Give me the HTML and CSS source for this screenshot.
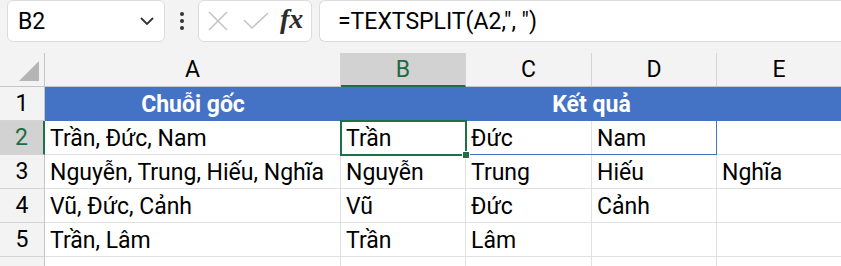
FILE: index.html
```html
<!DOCTYPE html>
<html>
   <head>
      <meta charset="utf-8">
      <link rel="stylesheet" href="styles.css">
   </head>
   <body>
      <div class="toolbar">
         <div class="namebox">
            <span>B2</span>
            <svg class="chevron" width="14" height="8" viewBox="0 0 14 8">
               <path d="M1,1 L7,7 L13,1" />
            </svg>
         </div>
         <div class="dots">
            <i></i><i></i><i></i>
         </div>
         <div class="iconbox">
            <svg class="cancel" width="20" height="20" viewBox="0 0 20 20">
               <path d="M1,1 L19,19 M19,1 L1,19" />
            </svg>
            <svg class="confirm" width="26" height="18" viewBox="0 0 26 18">
               <path d="M1,8 L9,16 L25,1" />
            </svg>
            <span class="fx">fx</span>
         </div>
         <div class="formula">=TEXTSPLIT(A2,", ")</div>
      </div>

      <div class="sheet">
         <div class="grid">
            <!-- column headers -->
            <div class="corner"><span class="tri"></span></div>
            <div class="colhead">A</div>
            <div class="colhead active">B</div>
            <div class="colhead">C</div>
            <div class="colhead">D</div>
            <div class="colhead">E</div>

            <!-- row 1 -->
            <div class="rowhead">1</div>
            <div class="title">Chuỗi gốc</div>
            <div class="title wide">Kết quả</div>

            <!-- row 2 -->
            <div class="rowhead active">2</div>
            <div class="cell">Trần, Đức, Nam</div>
            <div class="cell">Trần</div>
            <div class="cell">Đức</div>
            <div class="cell">Nam</div>
            <div class="cell"></div>

            <!-- row 3 -->
            <div class="rowhead">3</div>
            <div class="cell">Nguyễn, Trung, Hiếu, Nghĩa</div>
            <div class="cell">Nguyễn</div>
            <div class="cell">Trung</div>
            <div class="cell">Hiếu</div>
            <div class="cell">Nghĩa</div>

            <!-- row 4 -->
            <div class="rowhead">4</div>
            <div class="cell">Vũ, Đức, Cảnh</div>
            <div class="cell">Vũ</div>
            <div class="cell">Đức</div>
            <div class="cell">Cảnh</div>
            <div class="cell"></div>

            <!-- row 5 -->
            <div class="rowhead">5</div>
            <div class="cell">Trần, Lâm</div>
            <div class="cell">Trần</div>
            <div class="cell">Lâm</div>
            <div class="cell"></div>
            <div class="cell"></div>

            <!-- row 6, cut off by the window -->
            <div class="rowhead last"></div>
            <div class="cell last"></div>
            <div class="cell last"></div>
            <div class="cell last"></div>
            <div class="cell last"></div>
            <div class="cell last"></div>
         </div>

         <!-- spill range and active cell -->
         <div class="spill"></div>
         <div class="selection"><span class="handle"></span></div>
      </div>
   </body>
</html>
```

FILE: styles.css
```css
html, body {
   height : 266px;
   overflow : hidden;
}

body {
   margin : 0px;
   background-color : #f3f3f3;
   font-family : Roboto, "Liberation Sans", sans-serif;
   color : #000;
}

.toolbar {
   display : flex;
   align-items : center;
   height : 42px;
   padding : 0px 0px 0px 7px;
   margin-bottom : 11px;
}

.namebox, .iconbox, .formula {
   box-sizing : border-box;
   height : 42px;
   background-color : #fff;
   border : 1px solid #dcdcdc;
   border-radius : 6px;
   display : flex;
   align-items : center;
}

.namebox {
   width : 158px;
   padding : 0px 10px 0px 10px;
   justify-content : space-between;
   font-size : 23px;
}

.chevron path {
   fill : none;
   stroke : #333;
   stroke-width : 1.8px;
}

.dots {
   width : 33px;
   display : flex;
   flex-direction : column;
   align-items : center;
   gap : 3px;
}

.dots i {
   width : 4px;
   height : 4px;
   border-radius : 2px;
   background-color : #333;
}

.iconbox {
   width : 114px;
   padding : 0px 0px 0px 9px;
}

.iconbox svg path {
   fill : none;
   stroke : #c4c4c4;
   stroke-width : 1.6px;
}

.cancel {
   margin-right : 15px;
}

.confirm {
   margin-right : 11px;
}

.fx {
   font-family : "Liberation Serif", serif;
   font-style : italic;
   font-weight : bold;
   font-size : 28px;
   color : #2b2b2b;
   margin-top : -4px;
}

.formula {
   flex : 1;
   margin-left : 7px;
   padding-left : 18px;
   border-right : none;
   border-radius : 6px 0px 0px 6px;
   font-size : 23px;
}

.sheet {
   position : relative;
}

.grid {
   display : grid;
   grid-template-columns : 45px 296px 125px 126px 125px 125px;
   grid-template-rows : 34px 34px 34px 34px 34px 34px 9px;
   font-size : 23px;
}

.corner {
   position : relative;
   border-right : 1px solid #c6c6c6;
   border-bottom : 1px solid #c6c6c6;
}

.tri {
   position : absolute;
   right : 5px;
   bottom : 5px;
   width : 0px;
   height : 0px;
   border-left : 20px solid transparent;
   border-bottom : 20px solid #b5b5b5;
}

.colhead {
   display : flex;
   align-items : center;
   justify-content : center;
   border-right : 1px solid #d4d4d4;
   border-bottom : 1px solid #c6c6c6;
}

.colhead.active {
   background-color : #d2d2d2;
   color : #1e6b3f;
   border-bottom : 2px solid #1e7145;
}

.rowhead {
   display : flex;
   align-items : center;
   justify-content : center;
   border-right : 1px solid #c6c6c6;
   border-bottom : 1px solid #d4d4d4;
}

.rowhead.active {
   background-color : #d2d2d2;
   color : #1e6b3f;
   border-right : 2px solid #1e7145;
}

.title {
   background-color : #4472c4;
   color : #fff;
   font-weight : bold;
   display : flex;
   align-items : center;
   justify-content : center;
}

.title.wide {
   grid-column : span 4;
}

.cell {
   background-color : #fff;
   border-right : 1px solid #e1e1e1;
   border-bottom : 1px solid #e1e1e1;
   padding-left : 5px;
   display : flex;
   align-items : center;
   white-space : nowrap;
   padding-top : 2px;
}

.last {
   border-bottom : none;
}

.spill {
   position : absolute;
   left : 341px;
   top : 68px;
   width : 376px;
   height : 34px;
   box-sizing : border-box;
   border : 1px solid #4472c4;
   border-top : none;
}

.selection {
   position : absolute;
   left : 340px;
   top : 67px;
   width : 127px;
   height : 36px;
   box-sizing : border-box;
   border : 2px solid #1e7145;
}

.handle {
   position : absolute;
   right : -5px;
   bottom : -5px;
   width : 6px;
   height : 6px;
   background-color : #1e7145;
   border : 1px solid #fff;
}
```
